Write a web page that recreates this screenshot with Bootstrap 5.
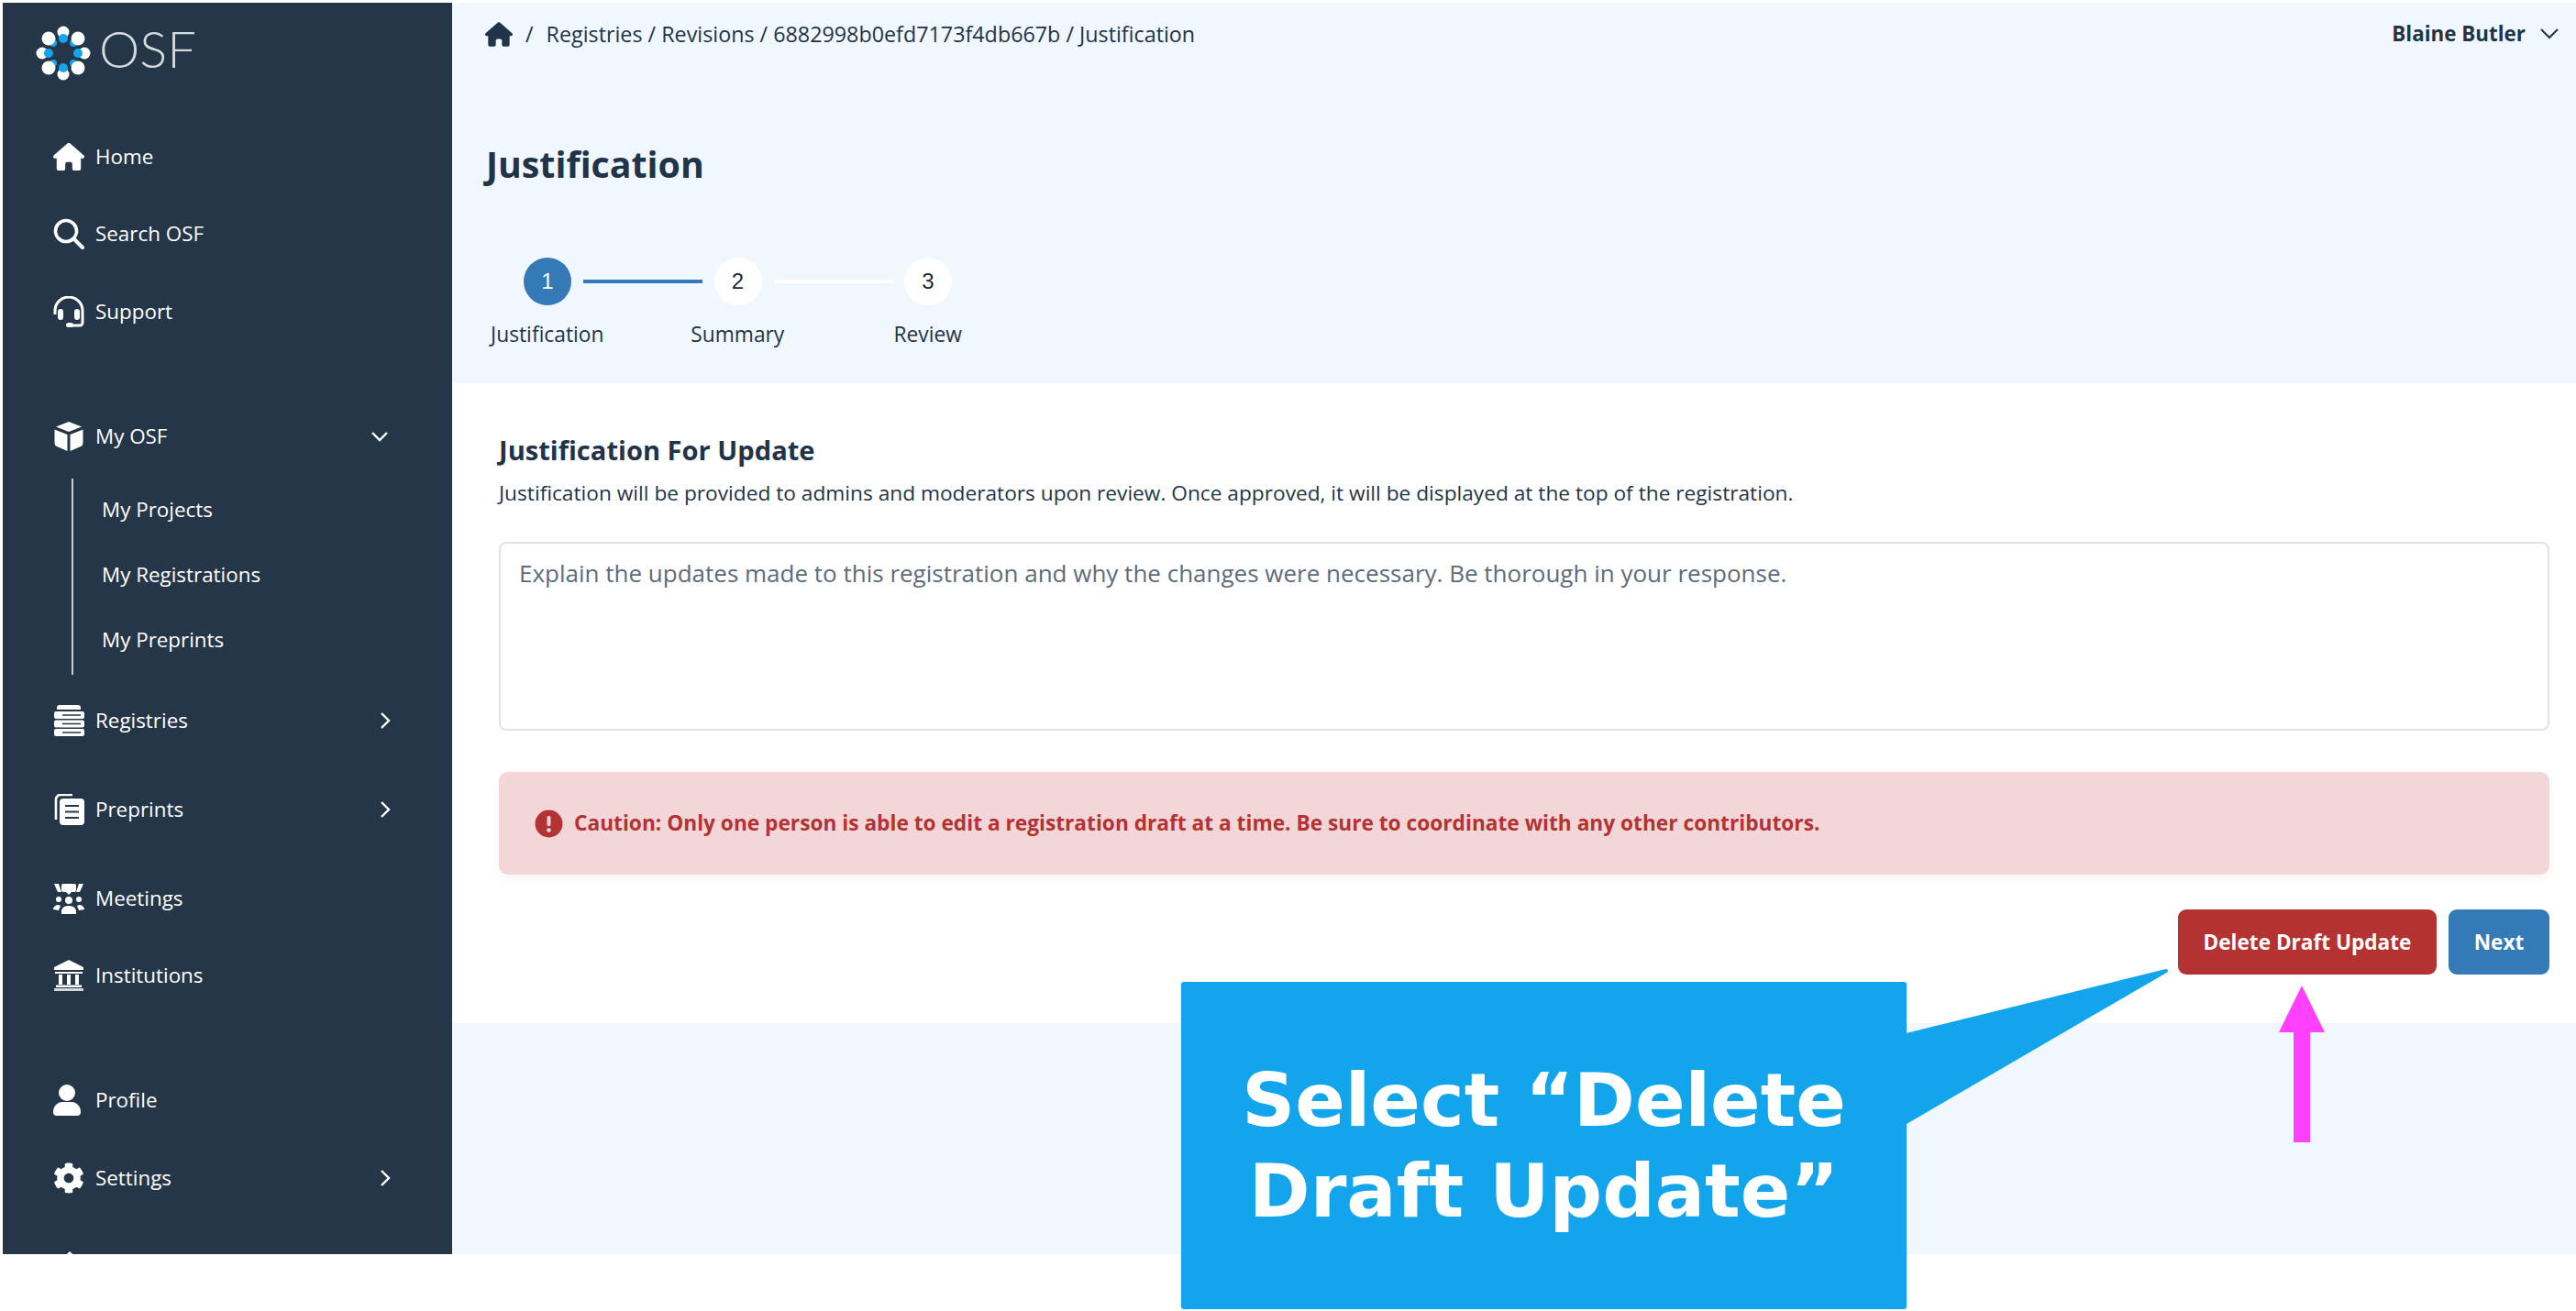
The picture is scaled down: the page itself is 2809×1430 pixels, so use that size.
<!DOCTYPE html>
<html lang="en">

<head>
  <meta charset="UTF-8">
  <meta name="viewport" content="width=device-width, initial-scale=1.0">
  <title>Justification - OSF</title>
  <link href="https://cdn.jsdelivr.net/npm/bootstrap@5.3.3/dist/css/bootstrap.min.css" rel="stylesheet">
  <script src="https://cdn.jsdelivr.net/npm/bootstrap@5.3.3/dist/js/bootstrap.bundle.min.js"></script>
  <style>
    html, body {
      height: 1430px;
      overflow: hidden;
    }

    body {
      position: relative;
      background-color: #fff;
      font-family: "Open Sans", "Liberation Sans", sans-serif;
      color: #1f3448;
    }

    .app-frame {
      margin: 3px 0 0 3px;
      height: 1365px;
      overflow: hidden;
    }

    /* sidebar */
    .side-bar {
      width: 490px;
      flex: none;
      background-color: #243648;
      color: #fff;
      overflow: hidden;
    }

    .side-logo {
      height: 125.5px;
      padding: 24px 0 0 35px;
    }

    .logo-word {
      font-family: "Lato", sans-serif;
      font-weight: 300;
      font-size: 56px;
      line-height: 52px;
      color: #d5dade;
    }

    .side-item {
      height: 84.5px;
      padding-left: 55px;
      padding-right: 67px;
      font-size: 22.4px;
      font-weight: 500;
      color: #fff;
      text-decoration: none;
    }

    .side-item:hover {
      color: #fff;
    }

    .side-ico {
      width: 34px;
      height: 34px;
      margin-right: 12px;
      flex: none;
      fill: #fff;
    }

    .side-gap {
      height: 52px;
    }

    .item-tall {
      height: 97px;
    }

    .item-short {
      height: 83px;
    }

    .chev-down {
      margin-right: 2px;
    }

    .sub-list {
      margin: 3.5px 0 1px 75px;
      border-left: 2px solid #c9ced4;
      height: 214px;
    }

    .sub-item {
      height: 71px;
      flex: none;
      padding-left: 31px;
      font-size: 22.4px;
      font-weight: 500;
      color: #fff;
      text-decoration: none;
    }

    .sub-item:first-child {
      margin-top: -2px;
    }

    .side-tip {
      margin: 38px 0 0 60px;
    }

    .mid-gap {
      height: 7.5px;
    }

    /* main column */
    .page-top {
      height: 415px;
      background-color: #f0f7fe;
      border-top-left-radius: 8px;
    }

    .crumb-bar {
      height: 68px;
      padding: 0 19px 0 36px;
      font-size: 23.3px;
      font-weight: 500;
    }

    .crumb-bar a {
      color: #1f3448;
      text-decoration: none;
    }

    .crumb-sep {
      margin: 0 14px;
    }

    .user-name {
      font-weight: 700;
      font-size: 22.4px;
    }

    .page-title {
      margin: 83px 0 0 37px;
      font-size: 39.3px;
      line-height: 50px;
      font-weight: 700;
    }

    .step-dots {
      margin: 77px 0 0 78px;
    }

    .step-dot {
      width: 52px;
      height: 52px;
      flex: none;
      border-radius: 50%;
      background-color: #fff;
      font-family: "Liberation Sans", sans-serif;
      font-size: 24px;
      color: #1f2a36;
    }

    .step-dot.is-on {
      background-color: #337ab7;
      color: #fff;
    }

    .step-link {
      width: 129.5px;
      height: 4px;
      margin: 0 13px;
      background-color: #fff;
    }

    .step-link.is-on {
      background-color: #337ab7;
    }

    .step-name {
      width: 207.5px;
      margin-top: 18px;
      font-size: 22.8px;
      line-height: 28px;
      text-align: center;
    }

    .form-panel {
      height: 698px;
      padding: 54px 29px 0 51px;
      background-color: #fff;
    }

    .panel-title {
      font-size: 29.1px;
      line-height: 38px;
      font-weight: 700;
      margin: 0 0 14px;
    }

    .panel-note {
      font-size: 22.7px;
      line-height: 28px;
      margin: 0 0 39px;
    }

    .form-control.note-box {
      height: 206px;
      padding: 13px 20px;
      font-size: 26px;
      border: 2px solid #e0e3e6;
      border-radius: 8px;
      resize: none;
      box-shadow: none;
    }

    .note-box::placeholder {
      color: #5d6b7b;
      opacity: 1;
    }

    .alert.caution-box {
      height: 112px;
      margin: 45px 0 38px;
      padding: 0 0 0 39px;
      border: 0;
      border-radius: 10px;
      background-color: #f2d6d8;
      box-shadow: 0 4px 8px rgba(180, 50, 50, .06);
      color: #b43232;
      font-size: 22.7px;
      font-weight: 700;
    }

    .btn.act-btn {
      height: 71px;
      padding: 0;
      border: 0;
      border-radius: 9px;
      color: #fff;
      font-size: 22.6px;
      font-weight: 700;
    }

    .btn-row {
      gap: 13px;
    }

    .btn-delete {
      width: 282px;
      background-color: #b43232;
    }

    .btn-next {
      width: 110px;
      background-color: #337ab7;
    }

    .page-foot {
      flex: 1;
      background-color: #f0f7fe;
    }

    /* annotation on top of the screenshot */
    .call-box {
      position: absolute;
      left: 1288px;
      top: 1071px;
      width: 791px;
      height: 357px;
      background-color: #12a5ec;
      border-radius: 3px;
      color: #fff;
      font-family: "DejaVu Sans", sans-serif;
      font-weight: 700;
      font-size: 80.5px;
      line-height: 99px;
      text-align: center;
    }

    .call-tail {
      position: absolute;
      left: 2070px;
      top: 1050px;
    }

    .up-arrow {
      position: absolute;
      left: 2485px;
      top: 1075px;
    }
  </style>
</head>

<body>
  <svg class="d-none">
    <symbol id="ico-house" viewBox="0 0 576 512"><path d="M575.8 255.5c0 18-15 32.1-32 32.1h-32l.7 160.2c0 2.7-.2 5.4-.5 8.1V472c0 22.1-17.9 40-40 40H456c-1.1 0-2.2 0-3.3-.1c-1.4 .1-2.8 .1-4.2 .1H416 392c-22.1 0-40-17.9-40-40V448 384c0-17.7-14.3-32-32-32H256c-17.7 0-32 14.3-32 32v64 24c0 22.1-17.9 40-40 40H160 128.1c-1.5 0-3-.1-4.5-.2c-1.2 .1-2.4 .2-3.6 .2H104c-22.1 0-40-17.9-40-40V360c0-.9 0-1.9 .1-2.8V287.6H32c-18 0-32-14-32-32.1c0-9 3-17 10-24L266.4 8c7-7 15-8 22-8s15 2 21 7L564.8 231.5c8 7 12 15 11 24z"/></symbol>
    <symbol id="ico-right" viewBox="0 0 12 20"><path d="M2 2l8 8-8 8" fill="none" stroke="#fff" stroke-width="2.4"/></symbol>
  </svg>

  <div class="app-frame d-flex">
    <nav class="side-bar">
      <div class="side-logo d-flex align-items-start gap-2">
        <svg width="62" height="62" viewBox="-31 -31 62 62">
          <g fill="#12a5ec">
            <circle cx="11" cy="-11" r="4"/><circle cx="11" cy="11" r="4"/><circle cx="-11" cy="11" r="4"/><circle cx="-11" cy="-11" r="4"/>
          </g>
          <g fill="#fff">
            <circle cx="0" cy="-23" r="6.5"/><circle cx="23" cy="0" r="6.5"/><circle cx="0" cy="23" r="6.5"/><circle cx="-23" cy="0" r="6.5"/>
            <circle cx="16" cy="-16" r="7.5"/><circle cx="16" cy="16" r="7.5"/><circle cx="-16" cy="16" r="7.5"/><circle cx="-16" cy="-16" r="7.5"/>
          </g>
          <g fill="#12a5ec">
            <circle cx="0" cy="-16" r="5"/><circle cx="16" cy="0" r="5"/><circle cx="0" cy="16" r="5"/><circle cx="-16" cy="0" r="5"/>
          </g>
        </svg>
        <span class="logo-word">OSF</span>
      </div>

      <a class="side-item d-flex align-items-center" href="#">
        <svg class="side-ico"><use href="#ico-house"/></svg>
        Home
      </a>
      <a class="side-item d-flex align-items-center" href="#">
        <svg class="side-ico" viewBox="0 0 34 34"><circle cx="14" cy="14" r="11.5" fill="none" stroke="#fff" stroke-width="3.6"/><path d="M22.5 22.5L32 32" stroke="#fff" stroke-width="4" stroke-linecap="round"/></svg>
        Search OSF
      </a>
      <a class="side-item d-flex align-items-center" href="#">
        <svg class="side-ico" viewBox="0 0 34 34"><path d="M2 20v-4a15 15 0 0 1 30 0v13a3 3 0 0 1-3 3h-9" fill="none" stroke="#fff" stroke-width="3"/><rect x="5" y="14" width="6" height="12" rx="3"/><rect x="23" y="14" width="6" height="12" rx="3"/><rect x="14" y="29" width="8" height="5" rx="2.5"/></svg>
        Support
      </a>

      <div class="side-gap"></div>

      <a class="side-item d-flex align-items-center" href="#">
        <svg class="side-ico" viewBox="0 0 34 34"><path d="M17 1l14 5.5L17 12 3 6.5z"/><path d="M1.5 9.5L15.5 15v18L4 28a4 4 0 0 1-2.5-3.7z"/><path d="M32.5 9.5L18.5 15v18L30 28a4 4 0 0 0 2.5-3.7z"/></svg>
        <span class="flex-grow-1">My OSF</span>
        <svg class="chev-down" width="20" height="12" viewBox="0 0 20 12"><path d="M2 2l8 8 8-8" fill="none" stroke="#fff" stroke-width="2.4"/></svg>
      </a>
      <div class="sub-list d-flex flex-column">
        <a class="sub-item d-flex align-items-center" href="#">My Projects</a>
        <a class="sub-item d-flex align-items-center" href="#">My Registrations</a>
        <a class="sub-item d-flex align-items-center" href="#">My Preprints</a>
      </div>
      <a class="side-item item-tall d-flex align-items-center" href="#">
        <svg class="side-ico" viewBox="0 0 34 34"><path d="M4 3a3 3 0 0 1 3-3h20a3 3 0 0 1 3 3v2H4z"/><rect x="1" y="7" width="33" height="8" rx="2"/><rect x="1" y="16.5" width="33" height="8" rx="2"/><rect x="1" y="26" width="33" height="8" rx="2"/><path d="M10 11h20M10 20.5h20M10 30h20" stroke="#243648" stroke-width="1.6"/></svg>
        <span class="flex-grow-1">Registries</span>
        <svg width="12" height="20"><use href="#ico-right"/></svg>
      </a>
      <a class="side-item item-tall d-flex align-items-center" href="#">
        <svg class="side-ico" viewBox="0 0 34 34"><path d="M3 28V6a5 5 0 0 1 5-5h13" fill="none" stroke="#fff" stroke-width="2.6"/><rect x="7" y="5" width="27" height="29" rx="4"/><path d="M13 13h15M13 19.5h15M13 26h15" stroke="#243648" stroke-width="2.2"/></svg>
        <span class="flex-grow-1">Preprints</span>
        <svg width="12" height="20"><use href="#ico-right"/></svg>
      </a>

      <div class="mid-gap"></div>

      <a class="side-item item-short d-flex align-items-center" href="#">
        <svg class="side-ico" viewBox="0 0 34 34"><path d="M1 1h5l3 9H5zM33 1h-5l-3 9h4zM11 1h12a2 2 0 0 1 2 2v5a2 2 0 0 1-2 2h-3l-3 3-3-3h-3a2 2 0 0 1-2-2V3a2 2 0 0 1 2-2z"/><circle cx="17" cy="19" r="4"/><circle cx="6" cy="18" r="3"/><circle cx="28" cy="18" r="3"/><path d="M9 34v-3c0-4 4-6 8-6s8 2 8 6v3zM0 29c0-3 3-5 6-5l2 1-2 5zM34 29c0-3-3-5-6-5l-2 1 2 5z"/></svg>
        Meetings
      </a>
      <a class="side-item d-flex align-items-center" href="#">
        <svg class="side-ico" viewBox="0 0 34 34"><path d="M17 0l16 8v3H1V8z"/><path d="M2 13h30v2H2zM6 16h4v11H6zM15 16h4v11h-4zM24 16h4v11h-4zM3 27.5h28V30H3z"/><rect x="1" y="31" width="32" height="3" opacity=".8"/></svg>
        Institutions
      </a>

      <div class="side-gap"></div>

      <a class="side-item d-flex align-items-center" href="#">
        <svg class="side-ico" viewBox="0 0 34 34"><circle cx="15" cy="9" r="9"/><path d="M0 30c0-7 5-11 10-11h10c5 0 10 4 10 11a4 4 0 0 1-4 4H4a4 4 0 0 1-4-4z"/></svg>
        Profile
      </a>
      <a class="side-item d-flex align-items-center" href="#">
        <svg class="side-ico" viewBox="0 0 512 512"><path d="M487.4 315.7l-42.6-24.6c4.3-23.2 4.3-47 0-70.2l42.6-24.6c4.9-2.8 7.1-8.6 5.5-14-11.1-35.6-30-67.8-54.7-94.6-3.8-4.1-10-5.1-14.8-2.3L380.8 110c-17.9-15.4-38.5-27.3-60.8-35.1V25.8c0-5.6-3.9-10.5-9.4-11.7-36.7-8.2-74.3-7.8-109.2 0-5.5 1.2-9.4 6.1-9.4 11.7V75c-22.2 7.9-42.8 19.8-60.8 35.1L88.7 85.5c-4.9-2.8-11-1.9-14.8 2.3-24.7 26.7-43.6 58.9-54.7 94.6-1.7 5.4.6 11.2 5.5 14L67.3 221c-4.3 23.2-4.3 47 0 70.2l-42.6 24.6c-4.9 2.8-7.1 8.6-5.5 14 11.1 35.6 30 67.8 54.7 94.6 3.8 4.1 10 5.1 14.8 2.3l42.6-24.6c17.9 15.4 38.5 27.3 60.8 35.1v49.2c0 5.6 3.9 10.5 9.4 11.7 36.7 8.2 74.3 7.8 109.2 0 5.5-1.2 9.4-6.1 9.4-11.7v-49.2c22.2-7.9 42.8-19.8 60.8-35.1l42.6 24.6c4.9 2.8 11 1.9 14.8-2.3 24.7-26.7 43.6-58.9 54.7-94.6 1.5-5.5-.7-11.3-5.6-14.1zM256 336c-44.1 0-80-35.9-80-80s35.9-80 80-80 80 35.9 80 80-35.9 80-80 80z"/></svg>
        <span class="flex-grow-1">Settings</span>
        <svg width="12" height="20"><use href="#ico-right"/></svg>
      </a>
      <svg class="side-tip d-block" width="26" height="12" viewBox="0 0 26 12"><path d="M13 0l13 12H0z" fill="#fff"/></svg>
    </nav>

    <main class="flex-grow-1 d-flex flex-column">
      <section class="page-top">
        <div class="crumb-bar d-flex align-items-center justify-content-between">
          <div class="d-flex align-items-center">
            <svg width="30" height="27" fill="#1f3448"><use href="#ico-house"/></svg>
            <span class="crumb-sep">/</span>
            <a href="#">Registries / Revisions / 6882998b0efd7173f4db667b / Justification</a>
          </div>
          <div class="user-name d-flex align-items-center gap-3">
            Blaine Butler
            <svg width="20" height="12" viewBox="0 0 20 12"><path d="M1 1l9 9 9-9" fill="none" stroke="#1f3448" stroke-width="2"/></svg>
          </div>
        </div>
        <h1 class="page-title">Justification</h1>
        <div class="step-dots d-flex align-items-center">
          <div class="step-dot is-on d-flex align-items-center justify-content-center">1</div>
          <div class="step-link is-on"></div>
          <div class="step-dot d-flex align-items-center justify-content-center">2</div>
          <div class="step-link"></div>
          <div class="step-dot d-flex align-items-center justify-content-center">3</div>
        </div>
        <div class="d-flex">
          <div class="step-name">Justification</div>
          <div class="step-name">Summary</div>
          <div class="step-name">Review</div>
        </div>
      </section>

      <section class="form-panel">
        <h2 class="panel-title">Justification For Update</h2>
        <p class="panel-note">Justification will be provided to admins and moderators upon review. Once approved, it will be displayed at the top of the registration.</p>
        <textarea class="form-control note-box" placeholder="Explain the updates made to this registration and why the changes were necessary. Be thorough in your response."></textarea>
        <div class="alert caution-box d-flex align-items-center gap-2">
          <svg class="me-1 flex-shrink-0" width="31" height="31" viewBox="0 0 31 31"><circle cx="15.5" cy="15.5" r="15" fill="#b43232"/><rect x="13.5" y="7" width="4" height="11" rx="1.5" fill="#f2d6d8"/><circle cx="15.5" cy="22.5" r="2.3" fill="#f2d6d8"/></svg>
          Caution: Only one person is able to edit a registration draft at a time. Be sure to coordinate with any other contributors.
        </div>
        <div class="btn-row d-flex justify-content-end">
          <button type="button" class="btn act-btn btn-delete">Delete Draft Update</button>
          <button type="button" class="btn act-btn btn-next">Next</button>
        </div>
      </section>

      <section class="page-foot"></section>
    </main>
  </div>

  <svg class="call-tail" width="300" height="180" viewBox="2070 1050 300 180"><path d="M2075 1130L2362 1059 2075 1226z" fill="#12a5ec" stroke="#12a5ec" stroke-width="4" stroke-linejoin="round"/></svg>
  <div class="call-box d-flex align-items-center justify-content-center">Select “Delete<br>Draft Update”</div>
  <svg class="up-arrow" width="50" height="171" viewBox="0 0 50 171"><path d="M25 0L50 51H34V171H16V51H0z" fill="#ff40ff"/></svg>
</body>
</html>
